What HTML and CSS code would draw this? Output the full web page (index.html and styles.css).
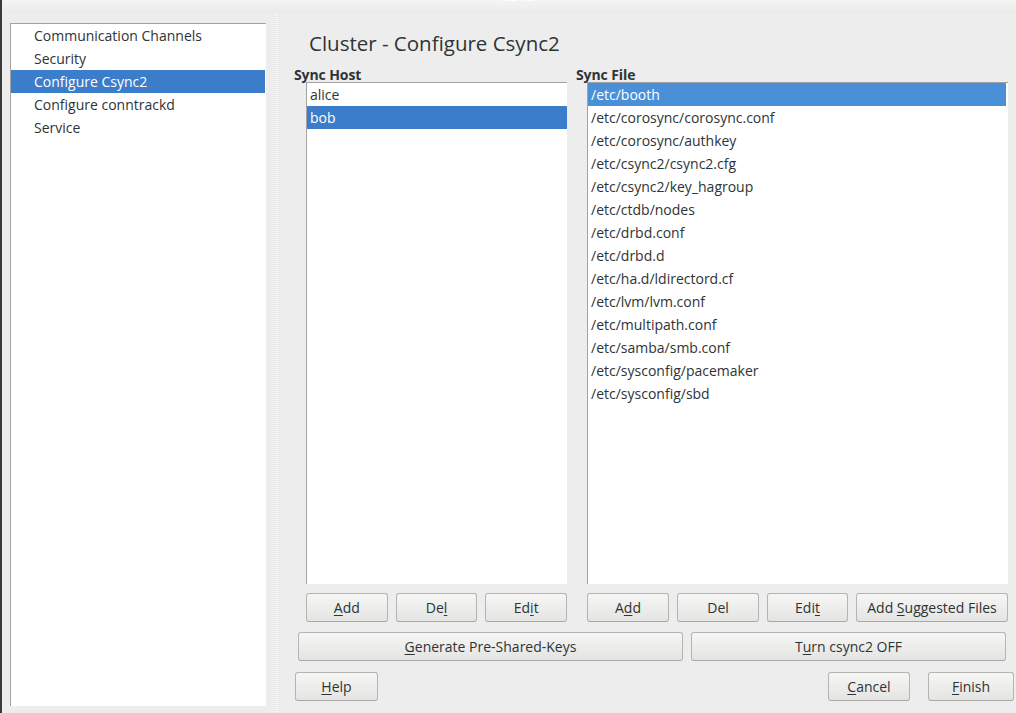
FILE: index.html
```html
<!DOCTYPE html>
<html>
<head>
<meta charset="utf-8">
<link rel="stylesheet" href="styles.css">
</head>
<body>
<div class="frame">
  <div class="titlebar"><span class="wintitle">YaST2</span></div>
  <div class="window">
    <aside class="sidebar">
      <div class="row">Communication Channels</div>
      <div class="row">Security</div>
      <div class="row sel">Configure Csync2</div>
      <div class="row">Configure conntrackd</div>
      <div class="row">Service</div>
    </aside>
    <div class="sep"></div>
    <main class="content">
      <h1 class="title">Cluster - Configure Csync2</h1>
      <div class="cols">
        <section class="col">
          <div class="label">Sync Host</div>
          <div class="list host">
            <div class="item">alice</div>
            <div class="item sel">bob</div>
          </div>
          <div class="btnrow three">
            <button class="btn"><u>A</u>dd</button>
            <button class="btn">De<u>l</u></button>
            <button class="btn">Ed<u>i</u>t</button>
          </div>
        </section>
        <section class="col">
          <div class="label">Sync File</div>
          <div class="list file">
            <div class="item focus">/etc/booth</div>
            <div class="item">/etc/corosync/corosync.conf</div>
            <div class="item">/etc/corosync/authkey</div>
            <div class="item">/etc/csync2/csync2.cfg</div>
            <div class="item">/etc/csync2/key_hagroup</div>
            <div class="item">/etc/ctdb/nodes</div>
            <div class="item">/etc/drbd.conf</div>
            <div class="item">/etc/drbd.d</div>
            <div class="item">/etc/ha.d/ldirectord.cf</div>
            <div class="item">/etc/lvm/lvm.conf</div>
            <div class="item">/etc/multipath.conf</div>
            <div class="item">/etc/samba/smb.conf</div>
            <div class="item">/etc/sysconfig/pacemaker</div>
            <div class="item">/etc/sysconfig/sbd</div>
          </div>
          <div class="btnrow four">
            <button class="btn w82">A<u>d</u>d</button>
            <button class="btn w82">Del</button>
            <button class="btn w81">Edi<u>t</u></button>
            <button class="btn grow">Add <u>S</u>uggested Files</button>
          </div>
        </section>
      </div>
      <div class="widerow">
        <button class="btn gen"><u>G</u>enerate Pre-Shared-Keys</button>
        <button class="btn turn">T<u>u</u>rn csync2 OFF</button>
      </div>
      <div class="footer">
        <button class="btn help"><u>H</u>elp</button>
        <div class="spacer"></div>
        <button class="btn cancel"><u>C</u>ancel</button>
        <button class="btn finish"><u>F</u>inish</button>
      </div>
    </main>
  </div>
</div>
</body>
</html>
```

FILE: styles.css
```css
* { box-sizing: border-box; }
html, body { margin: 0; padding: 0; }
body {
  width: 1016px;
  height: 713px;
  overflow: hidden;
  background: #ededed;
  font-family: "Open Sans", "DejaVu Sans", sans-serif;
  color: #2e3436;
}
.frame {
  height: 713px;
  border-left: 2px solid #3a3a3a;
  display: flex;
  flex-direction: column;
}
.titlebar {
  height: 13px;
  flex: none;
  overflow: hidden;
  background: linear-gradient(#f4f4f4, #ebebeb);
  display: flex;
  justify-content: center;
  align-items: flex-start;
  padding-left: 10px;
}
.wintitle {
  margin-top: -12px;
  font-size: 14px;
  line-height: 16px;
  font-weight: bold;
  color: #ffffff;
}
.window {
  flex: 1;
  display: flex;
  padding-left: 8px;
}
.sidebar {
  width: 256px;
  margin: 10px 0 7px 0;
  background: #fff;
  border-top: 1px solid #a3a3a3;
  border-left: 1px solid #a3a3a3;
  font-size: 14px;
}
.row {
  height: 23px;
  line-height: 23px;
  padding-left: 23px;
  white-space: nowrap;
}
.row.sel { background: #3b7dca; color: #fff; margin-right: 1px; }
.sep {
  width: 2px;
  margin: 2px 0 0 10px;
  background-image: repeating-linear-gradient(#ffffff 0 1px, #e2e2e2 1px 2px);
}
.content {
  flex: 1;
  display: flex;
  flex-direction: column;
}
.title {
  margin: 18px 0 0 31px;
  font-size: 20.5px;
  line-height: 24px;
  font-weight: normal;
  color: #2e3436;
}
.cols {
  margin: 13px 0 0 16px;
  display: grid;
  grid-template-columns: 273px 432px;
  column-gap: 9px;
}
.col { display: flex; flex-direction: column; }
.label {
  font-size: 14px;
  font-weight: bold;
  line-height: 14px;
  height: 14px;
  white-space: nowrap;
  letter-spacing: -0.1px;
}
.list {
  height: 502px;
  background: #fff;
  border-top: 1px solid #a3a3a3;
  border-left: 1px solid #a3a3a3;
  font-size: 14px;
}
.list.host { margin-left: 12px; }
.list.file { margin-left: 11px; margin-right: 0; }
.item {
  height: 23px;
  line-height: 23px;
  padding-left: 3px;
  white-space: nowrap;
}
.item.sel { background: #3b7dca; color: #fff; }
.item.focus { background: #4a90d9; color: #fff; margin-right: 2px; }
.btnrow {
  margin-top: 9px;
  display: flex;
  gap: 8px;
  height: 29px;
}
.btnrow.three { margin-left: 12px; }
.btnrow.three .btn { flex: 1; }
.btnrow.four { margin-left: 11px; gap: 8px; }
.w82 { width: 82px; flex: none; }
.w81 { width: 81px; flex: none; }
.grow { flex: 1; }
.btn {
  height: 29px;
  padding: 0;
  border: 1px solid #b4b4b1;
  border-bottom-color: #a8a8a5;
  border-radius: 3px;
  background: linear-gradient(#f6f6f5, #e4e4e2);
  font-family: "Open Sans", "DejaVu Sans", sans-serif;
  font-size: 14px;
  color: #2e3436;
  text-align: center;
  white-space: nowrap;
}
.btn u { text-decoration-thickness: 1px; text-underline-offset: 2px; }
.widerow {
  margin: 10px 0 0 20px;
  display: flex;
  gap: 8px;
}
.gen { width: 385px; }
.turn { width: 315px; }
.footer {
  margin: 11px 2px 0 17px;
  display: flex;
  gap: 18px;
}
.spacer { flex: 1; }
.help { width: 83px; }
.cancel { width: 82px; }
.finish { width: 86px; }
```
